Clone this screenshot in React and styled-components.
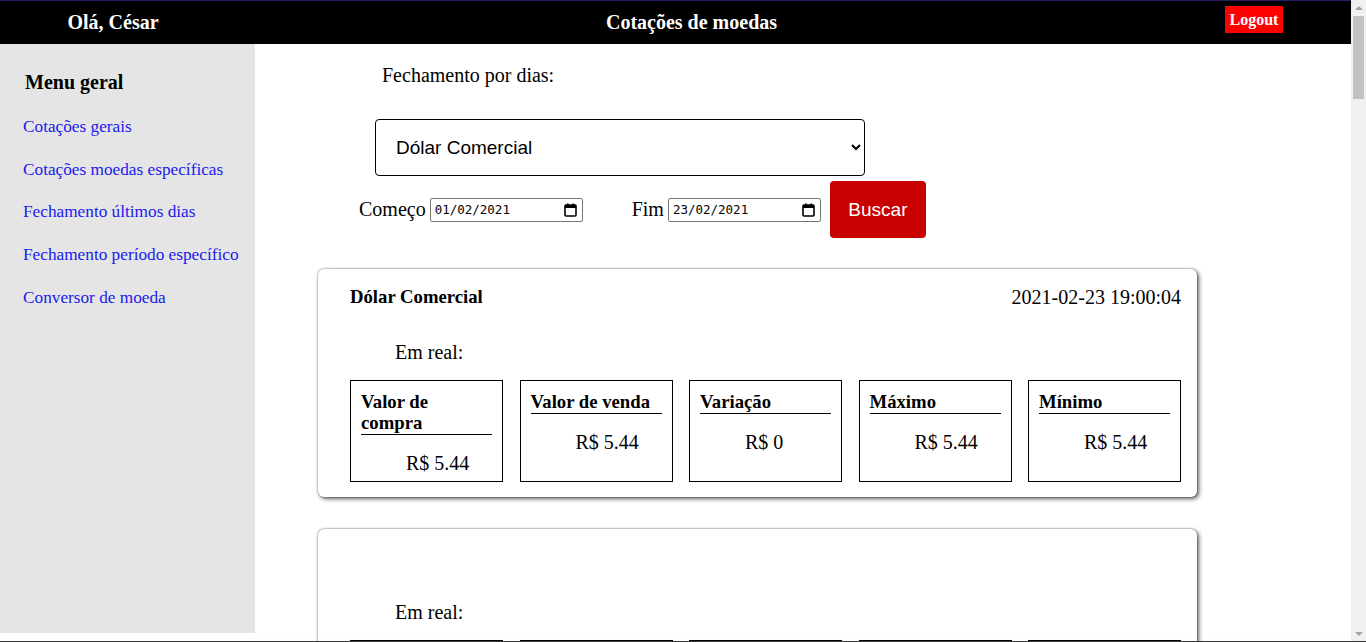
import React from "react";
import styled, { createGlobalStyle } from "styled-components";

const GlobalStyle = createGlobalStyle`
  html, body {
    margin: 0;
    padding: 0;
    background: #fff;
    font-family: "Liberation Serif", "Times New Roman", serif;
    color: #000;
  }
`;

const Page = styled.div`
  margin-right: 15px;
`;

const Header = styled.header`
  display: grid;
  grid-template-columns: 226px 1fr 194px;
  align-items: center;
  height: 43px;
  background: #000;
  border-top: 1px solid #2c1d62;
  color: #fff;
  text-align: center;
`;

const HeaderText = styled.div`
  font-size: 20px;
  font-weight: bold;
`;

const LogoutButton = styled.button`
  justify-self: center;
  align-self: start;
  margin-top: 5px;
  background: #ff0000;
  color: #fff;
  border: none;
  padding: 4px 5px;
  font-family: "Liberation Serif", serif;
  font-size: 16px;
  font-weight: bold;
  line-height: 19px;
  cursor: pointer;
`;

const Body = styled.div`
  display: flex;
  align-items: flex-start;
`;

const Sidebar = styled.nav`
  flex: 0 0 255px;
  height: 589px;
  background: #e5e5e5;
  padding-top: 27px;
  box-sizing: border-box;
`;

const MenuTitle = styled.h3`
  margin: 0 0 23px 25px;
  font-size: 20px;
  line-height: 23px;
`;

const MenuList = styled.div`
  display: flex;
  flex-direction: column;
  gap: 22.7px;
  padding-left: 23px;
`;

const MenuLink = styled.a`
  color: #1a1aee;
  font-size: 17.25px;
  line-height: 20px;
  text-decoration: none;
`;

const Main = styled.main`
  flex: 1;
  padding-bottom: 40px;
`;

const PageTitle = styled.p`
  margin: 20px 0 0 127px;
  font-size: 20px;
  line-height: 23px;
`;

const CurrencySelect = styled.select`
  display: block;
  margin: 32px 0 0 120px;
  width: 490px;
  height: 57px;
  padding: 0 16px;
  border: 1px solid #000;
  border-radius: 4px;
  background: #fff;
  font-family: "Liberation Sans", Arial, sans-serif;
  font-size: 19px;
  color: #000;
`;

const FilterRow = styled.div`
  display: flex;
  align-items: center;
  margin: 5px 0 0 104px;
`;

const FieldLabel = styled.label`
  display: flex;
  align-items: center;
  gap: 4px;
  font-size: 20px;
  margin-right: ${(p) => p.$gap || 0}px;
`;

const DateField = styled.div`
  display: flex;
  align-items: center;
  justify-content: space-between;
  width: 153px;
  height: 24px;
  box-sizing: border-box;
  padding: 0 5px 0 4px;
  border: 1px solid #767676;
  border-radius: 2px;
  font-family: "DejaVu Sans Mono", monospace;
  font-size: 12.5px;
  color: #000;
`;

const SearchButton = styled.button`
  width: 96px;
  height: 57px;
  border: none;
  border-radius: 4px;
  background: #c80000;
  color: #fff;
  font-family: "Liberation Sans", Arial, sans-serif;
  font-size: 19px;
  cursor: pointer;
`;

const Card = styled.section`
  width: 879px;
  box-sizing: border-box;
  margin: 31px 0 32px 63px;
  padding: 16px 16px 15px 32px;
  border-radius: 6px;
  background: #fff;
  box-shadow: 0 0 2px rgba(0, 0, 0, 0.6), 2px 2px 4px rgba(0, 0, 0, 0.6);

  & + & {
    margin-top: 0;
  }
`;

const CardHeader = styled.div`
  display: flex;
  justify-content: space-between;
  align-items: center;
  height: 24px;
`;

const CardTitle = styled.div`
  font-size: 18.72px;
  font-weight: bold;
`;

const CardDate = styled.div`
  font-size: 20px;
`;

const SubTitle = styled.p`
  margin: 32px 0 16px 45px;
  font-size: 20px;
  line-height: 23px;
`;

const BoxRow = styled.div`
  display: grid;
  grid-template-columns: repeat(5, 153px);
  justify-content: space-between;
`;

const ValueBox = styled.div`
  border: 1px solid #000;
  padding: 10px 10px 6px;
`;

const BoxLabel = styled.div`
  font-size: 18.72px;
  font-weight: bold;
  line-height: 21px;
  padding-bottom: 1px;
  border-bottom: 1px solid #000;
`;

const BoxValue = styled.div`
  margin-top: 17px;
  padding-left: 45px;
  font-size: 20px;
  line-height: 23px;
  white-space: nowrap;
`;

const BottomEdge = styled.div`
  position: fixed;
  left: 0;
  right: 0;
  bottom: 0;
  height: 1px;
  background: #3a3a3a;
  box-shadow: 0 -3px 6px rgba(0, 0, 0, 0.06);
`;

const ScrollTrack = styled.div`
  position: fixed;
  top: 0;
  right: 0;
  bottom: 1px;
  width: 15px;
  background: #f1f1f1;
  display: flex;
  flex-direction: column;
  align-items: center;
`;

const ScrollArrow = styled.div`
  width: 0;
  height: 0;
  margin: ${(p) => (p.$down ? "auto 0 5px" : "6px 0 4px")};
  border-left: 4px solid transparent;
  border-right: 4px solid transparent;
  ${(p) => (p.$down ? "border-top: 4px solid #a3a3a3;" : "border-bottom: 4px solid #a3a3a3;")}
`;

const ScrollThumb = styled.div`
  width: 11px;
  height: 83px;
  margin-top: 2px;
  background: #c1c1c1;
`;

function CalendarIcon() {
  return (
    <svg width="13" height="14" viewBox="0 0 13 14">
      <rect x="1" y="2" width="11" height="11" rx="1" fill="none" stroke="#000" strokeWidth="1.6" />
      <rect x="1" y="2" width="11" height="3" fill="#000" />
      <rect x="3" y="0.5" width="1.6" height="2.5" fill="#000" />
      <rect x="8.4" y="0.5" width="1.6" height="2.5" fill="#000" />
    </svg>
  );
}

const menu = [
  "Cotações gerais",
  "Cotações moedas específicas",
  "Fechamento últimos dias",
  "Fechamento período específico",
  "Conversor de moeda",
];

const labels = ["Valor de compra", "Valor de venda", "Variação", "Máximo", "Mínimo"];

const cards = [
  { title: "Dólar Comercial", date: "2021-02-23 19:00:04", values: ["5.44", "5.44", "0", "5.44", "5.44"] },
  ...Array.from({ length: 16 }, () => ({ title: "", date: "", values: ["", "", "", "", ""] })),
];

export default function App() {
  return (
    <>
      <GlobalStyle />
      <Page>
        <Header>
          <HeaderText>Olá, César</HeaderText>
          <HeaderText>Cotações de moedas</HeaderText>
          <LogoutButton>Logout</LogoutButton>
        </Header>
        <Body>
          <Sidebar>
            <MenuTitle>Menu geral</MenuTitle>
            <MenuList>
              {menu.map((item) => (
                <MenuLink href="#" key={item}>
                  {item}
                </MenuLink>
              ))}
            </MenuList>
          </Sidebar>
          <Main>
            <PageTitle>Fechamento por dias:</PageTitle>
            <CurrencySelect defaultValue="USD-BRL">
              <option value="USD-BRL">Dólar Comercial</option>
              <option value="EUR-BRL">Euro</option>
            </CurrencySelect>
            <FilterRow>
              <FieldLabel $gap={49}>
                Começo
                <DateField>
                  <span>01/02/2021</span>
                  <CalendarIcon />
                </DateField>
              </FieldLabel>
              <FieldLabel $gap={9}>
                Fim
                <DateField>
                  <span>23/02/2021</span>
                  <CalendarIcon />
                </DateField>
              </FieldLabel>
              <SearchButton>Buscar</SearchButton>
            </FilterRow>
            {cards.map((card, i) => (
              <Card key={i}>
                <CardHeader>
                  <CardTitle>{card.title}</CardTitle>
                  <CardDate>{card.date}</CardDate>
                </CardHeader>
                <SubTitle>Em real:</SubTitle>
                <BoxRow>
                  {labels.map((label, j) => (
                    <ValueBox key={label}>
                      <BoxLabel>{label}</BoxLabel>
                      <BoxValue>R$ {card.values[j]}</BoxValue>
                    </ValueBox>
                  ))}
                </BoxRow>
              </Card>
            ))}
          </Main>
        </Body>
      </Page>
      <ScrollTrack>
        <ScrollArrow />
        <ScrollThumb />
        <ScrollArrow $down />
      </ScrollTrack>
      <BottomEdge />
    </>
  );
}
